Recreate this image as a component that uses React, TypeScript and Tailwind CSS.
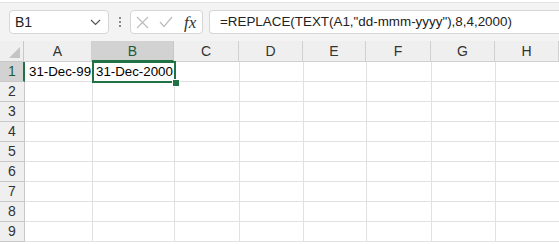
import React from "react";

const cols = [
  { l: "A", w: 68 },
  { l: "B", w: 82 },
  { l: "C", w: 65 },
  { l: "D", w: 64 },
  { l: "E", w: 63 },
  { l: "F", w: 65 },
  { l: "G", w: 64 },
  { l: "H", w: 64 },
];

const font = { fontFamily: "'Liberation Sans', Arial, sans-serif" };

export default function App() {
  const rows = [1, 2, 3, 4, 5, 6, 7, 8, 9];
  return (
    <div className="w-[559px] h-[244px] overflow-hidden bg-white" style={font}>
      {/* top strip */}
      <div className="h-[3px] bg-white border-b border-[#e3e3e3]" />
      {/* formula bar */}
      <div className="h-[38px] bg-[#f3f3f3] flex items-start pt-[7px] pl-[9px] gap-0">
        <div className="w-[100px] h-[24px] bg-white border border-[#d6d6d6] rounded-[4px] flex items-center justify-between pl-[5px] pr-[7px]">
          <span className="text-[14px] text-[#222]">B1</span>
          <svg width="11" height="7" viewBox="0 0 11 7">
            <path d="M1 1 L5.5 5.5 L10 1" fill="none" stroke="#555" strokeWidth="1.2" />
          </svg>
        </div>
        <div className="w-[21px] h-[24px] flex flex-col items-center justify-center gap-[2px]">
          <div className="w-[2px] h-[2px] bg-[#8a8a8a]" />
          <div className="w-[2px] h-[2px] bg-[#8a8a8a]" />
          <div className="w-[2px] h-[2px] bg-[#8a8a8a]" />
        </div>
        <div className="w-[73px] h-[24px] bg-white border border-[#d6d6d6] rounded-[4px] flex items-center pl-[5px] gap-[10px]">
          <svg width="13" height="13" viewBox="0 0 13 13">
            <path d="M1 1 L12 12 M12 1 L1 12" stroke="#bdbdbd" strokeWidth="1.2" />
          </svg>
          <svg width="14" height="12" viewBox="0 0 14 12">
            <path d="M1 6 L5 10.5 L13 1" fill="none" stroke="#bdbdbd" strokeWidth="1.2" />
          </svg>
          <span
            className="text-[17px] italic text-[#333] leading-none ml-[1px]"
            style={{ fontFamily: "'Liberation Serif', serif" }}
          >
            fx
          </span>
        </div>
        <div className="ml-[6px] flex-1 h-[24px] bg-white border border-r-0 border-[#d6d6d6] rounded-l-[4px] flex items-center pl-[10px]">
          <span className="text-[13.4px] text-[#222] whitespace-nowrap">
            =REPLACE(TEXT(A1,"dd-mmm-yyyy"),8,4,2000)
          </span>
        </div>
      </div>
      {/* grid */}
      <div className="relative">
        {/* header row */}
        <div className="flex h-[21px]">
          <div className="w-[25px] h-[21px] bg-[#efefef] border-r border-b border-[#c8c8c8] relative">
            <svg className="absolute right-[3px] bottom-[3px]" width="11" height="11" viewBox="0 0 11 11">
              <path d="M11 0 L11 11 L0 11 Z" fill="#c4c4c4" />
            </svg>
          </div>
          {cols.map((c) => (
            <div
              key={c.l}
              style={{ width: c.w }}
              className={
                c.l === "B"
                  ? "h-[21px] shrink-0 bg-[#d2d2d2] border-r border-[#c8c8c8] border-b-2 border-b-[#217346] flex items-center justify-center text-[14px] text-[#1d5a38] pt-[1px]"
                  : "h-[21px] shrink-0 bg-[#efefef] border-r border-b border-[#d0d0d0] flex items-center justify-center text-[14px] text-[#333]"
              }
            >
              {c.l}
            </div>
          ))}
        </div>
        {rows.map((r) => (
          <div key={r} className="flex h-[20px]">
            <div
              className={
                r === 1
                  ? "w-[25px] h-[20px] shrink-0 bg-[#d2d2d2] border-r-2 border-[#217346] border-b border-b-[#c8c8c8] flex items-center justify-center text-[14px] text-[#1d5a38] pl-[1px]"
                  : "w-[25px] h-[20px] shrink-0 bg-[#efefef] border-r border-b border-[#c8c8c8] flex items-center justify-center text-[14px] text-[#333]"
              }
            >
              {r}
            </div>
            {cols.map((c, i) => (
              <div
                key={c.l}
                style={{ width: c.w }}
                className="h-[20px] shrink-0 border-r border-b border-[#e1e1e1] flex items-center pl-[4px] text-[13.3px] text-black whitespace-nowrap overflow-visible"
              >
                {r === 1 && i === 0 ? "31-Dec-99" : r === 1 && i === 1 ? <span className="ml-[-1px]">31-Dec-2000</span> : ""}
              </div>
            ))}
          </div>
        ))}
        {/* selection */}
        <div className="absolute left-[92px] top-[20px] w-[84px] h-[22px] border-2 border-[#217346] pointer-events-none" />
        <div className="absolute left-[172px] top-[38px] w-[6px] h-[6px] bg-[#217346] border border-white box-content" />
      </div>
    </div>
  );
}
